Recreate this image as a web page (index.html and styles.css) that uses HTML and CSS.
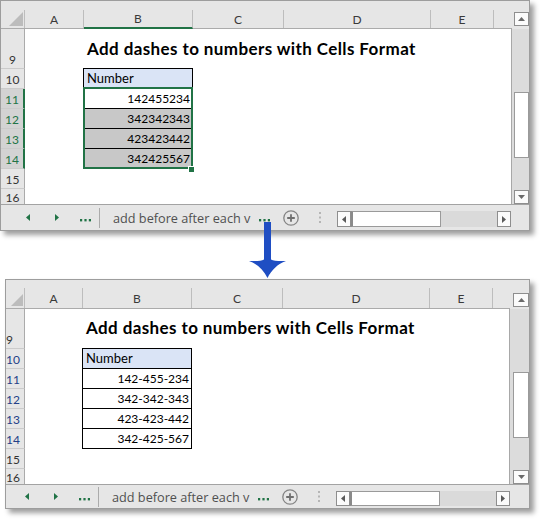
FILE: index.html
```html
<!DOCTYPE html>
<html lang="en">
<head>
<meta charset="utf-8">
<title>Add dashes to numbers with Cells Format</title>
<link rel="stylesheet" href="styles.css">
</head>
<body>
<div class="page">

  <div class="win win-top">
    <div class="sheet">
      <div class="corner"><svg class="corner-tri" viewBox="0 0 14 14"><polygon points="14,0 14,14 0,14" fill="#bcbcbc"/></svg></div>
      <div class="ch">A</div>
      <div class="ch ch-sel">B</div>
      <div class="ch">C</div>
      <div class="ch">D</div>
      <div class="ch">E</div>
      <div class="rh">9</div>
      <div class="rh">10</div>
      <div class="rh rh-sel">11</div>
      <div class="rh rh-sel">12</div>
      <div class="rh rh-sel">13</div>
      <div class="rh rh-sel">14</div>
      <div class="rh">15</div>
      <div class="rh rh-last">16</div>
      <div class="title">Add dashes to numbers with Cells Format</div>
      <div class="tbl">
        <div class="cell cell-head">Number</div>
        <div class="cell">142455234</div>
        <div class="cell shade">342342343</div>
        <div class="cell shade">423423442</div>
        <div class="cell shade">342425567</div>
      </div>
      <div class="selection"><span class="handle"></span></div>
    </div>
    <div class="vscroll">
      <div class="vbtn vbtn-up"><svg width="7" height="4" viewBox="0 0 7 4"><polygon points="0,4 7,4 3.5,0" fill="#6a6a6a"/></svg></div>
      <div class="vtrack-a"></div>
      <div class="vthumb"></div>
      <div class="vtrack-b"></div>
      <div class="vbtn"><svg width="7" height="4" viewBox="0 0 7 4"><polygon points="0,0 7,0 3.5,4" fill="#6a6a6a"/></svg></div>
    </div>
    <div class="tabbar">
      <svg class="nav nav-prev" width="4" height="7" viewBox="0 0 4 7"><polygon points="4,0 4,7 0,3.5" fill="#217346"/></svg>
      <svg class="nav nav-next" width="4" height="7" viewBox="0 0 4 7"><polygon points="0,0 0,7 4,3.5" fill="#217346"/></svg>
      <svg class="more more-a" width="11" height="3" viewBox="0 0 11 3"><rect x="0" y="0" width="2.2" height="2.4" fill="#217346"/><rect x="4.4" y="0" width="2.2" height="2.4" fill="#217346"/><rect x="8.8" y="0" width="2.2" height="2.4" fill="#217346"/></svg>
      <span class="tab-sep"></span>
      <span class="tab-name">add before after each v</span>
      <svg class="more more-b" width="11" height="3" viewBox="0 0 11 3"><rect x="0" y="0" width="2.2" height="2.4" fill="#217346"/><rect x="4.4" y="0" width="2.2" height="2.4" fill="#217346"/><rect x="8.8" y="0" width="2.2" height="2.4" fill="#217346"/></svg>
      <svg class="add-sheet" width="16" height="16" viewBox="0 0 16 16"><circle cx="8" cy="8" r="7.2" fill="none" stroke="#858585" stroke-width="1.3"/><path d="M8 4.2v7.6M4.2 8h7.6" stroke="#6f6f6f" stroke-width="1.8"/></svg>
      <svg class="vdots" width="2" height="11" viewBox="0 0 2 11"><rect x="0" y="0" width="2" height="2" fill="#b5b5b5"/><rect x="0" y="4.5" width="2" height="2" fill="#b5b5b5"/><rect x="0" y="9" width="2" height="2" fill="#b5b5b5"/></svg>
      <div class="hscroll">
        <div class="hbtn"><svg width="4" height="7" viewBox="0 0 4 7"><polygon points="4,0 4,7 0,3.5" fill="#5a5a5a"/></svg></div>
        <div class="hthumb"></div>
        <div class="htrack"></div>
        <div class="hbtn"><svg width="4" height="7" viewBox="0 0 4 7"><polygon points="0,0 0,7 4,3.5" fill="#5a5a5a"/></svg></div>
      </div>
    </div>
  </div>

  <svg class="arrow" width="38" height="57" viewBox="0 0 38 57">
    <rect x="15" y="0" width="7" height="40" fill="#1f4ec3"/>
    <path d="M0 39 C8 39.4 12.5 38.6 15 37.4 L22 37.4 C24.5 38.6 29 39.4 37 39 C28.5 42 22.5 48 18.5 56 C14.5 48 8.5 42 0 39 Z" fill="#1f4ec3"/>
  </svg>

  <div class="win win-bottom">
    <div class="sheet">
      <div class="corner"><svg class="corner-tri" viewBox="0 0 14 14"><polygon points="14,0 14,14 0,14" fill="#bcbcbc"/></svg></div>
      <div class="ch">A</div>
      <div class="ch">B</div>
      <div class="ch">C</div>
      <div class="ch">D</div>
      <div class="ch">E</div>
      <div class="rh">9</div>
      <div class="rh rh-blue">10</div>
      <div class="rh rh-blue">11</div>
      <div class="rh rh-blue">12</div>
      <div class="rh rh-blue">13</div>
      <div class="rh rh-blue">14</div>
      <div class="rh">15</div>
      <div class="rh rh-last">16</div>
      <div class="title">Add dashes to numbers with Cells Format</div>
      <div class="tbl">
        <div class="cell cell-head">Number</div>
        <div class="cell">142-455-234</div>
        <div class="cell">342-342-343</div>
        <div class="cell">423-423-442</div>
        <div class="cell">342-425-567</div>
      </div>
    </div>
    <div class="vscroll">
      <div class="vbtn vbtn-up"><svg width="7" height="4" viewBox="0 0 7 4"><polygon points="0,4 7,4 3.5,0" fill="#6a6a6a"/></svg></div>
      <div class="vtrack-a"></div>
      <div class="vthumb"></div>
      <div class="vtrack-b"></div>
      <div class="vbtn"><svg width="7" height="4" viewBox="0 0 7 4"><polygon points="0,0 7,0 3.5,4" fill="#6a6a6a"/></svg></div>
    </div>
    <div class="tabbar">
      <svg class="nav nav-prev" width="4" height="7" viewBox="0 0 4 7"><polygon points="4,0 4,7 0,3.5" fill="#217346"/></svg>
      <svg class="nav nav-next" width="4" height="7" viewBox="0 0 4 7"><polygon points="0,0 0,7 4,3.5" fill="#217346"/></svg>
      <svg class="more more-a" width="11" height="3" viewBox="0 0 11 3"><rect x="0" y="0" width="2.2" height="2.4" fill="#217346"/><rect x="4.4" y="0" width="2.2" height="2.4" fill="#217346"/><rect x="8.8" y="0" width="2.2" height="2.4" fill="#217346"/></svg>
      <span class="tab-sep"></span>
      <span class="tab-name">add before after each v</span>
      <svg class="more more-b" width="11" height="3" viewBox="0 0 11 3"><rect x="0" y="0" width="2.2" height="2.4" fill="#217346"/><rect x="4.4" y="0" width="2.2" height="2.4" fill="#217346"/><rect x="8.8" y="0" width="2.2" height="2.4" fill="#217346"/></svg>
      <svg class="add-sheet" width="16" height="16" viewBox="0 0 16 16"><circle cx="8" cy="8" r="7.2" fill="none" stroke="#858585" stroke-width="1.3"/><path d="M8 4.2v7.6M4.2 8h7.6" stroke="#6f6f6f" stroke-width="1.8"/></svg>
      <svg class="vdots" width="2" height="11" viewBox="0 0 2 11"><rect x="0" y="0" width="2" height="2" fill="#b5b5b5"/><rect x="0" y="4.5" width="2" height="2" fill="#b5b5b5"/><rect x="0" y="9" width="2" height="2" fill="#b5b5b5"/></svg>
      <div class="hscroll">
        <div class="hbtn"><svg width="4" height="7" viewBox="0 0 4 7"><polygon points="4,0 4,7 0,3.5" fill="#5a5a5a"/></svg></div>
        <div class="hthumb"></div>
        <div class="htrack"></div>
        <div class="hbtn"><svg width="4" height="7" viewBox="0 0 4 7"><polygon points="0,0 0,7 4,3.5" fill="#5a5a5a"/></svg></div>
      </div>
    </div>
  </div>

</div>
</body>
</html>
```

FILE: styles.css
```css
* { box-sizing: border-box; }

html, body {
  margin: 0;
  padding: 0;
  background: #fff;
}

body {
  font-family: "Lato", "Liberation Sans", sans-serif;
  color: #000;
}

.page {
  position: relative;
  width: 542px;
  height: 521px;
}

/* ---------- window ---------- */
.win {
  display: grid;
  border: 1px solid #9d9d9d;
  background: #e6e6e6;
  box-shadow: 4px 4px 5px rgba(0, 0, 0, 0.38);
}

.win-top {
  --hl: 27px;
  width: 530px;
  height: 231px;
  grid-template-columns: 511px 17px;
  grid-template-rows: 203px 26px;
}

.win-bottom {
  --hl: 28px;
  width: 525px;
  height: 230px;
  margin: 48px 0 0 5px;
  grid-template-columns: 504px 19px;
  grid-template-rows: 204px 24px;
}

/* ---------- sheet grid ---------- */
.sheet {
  display: grid;
  overflow: hidden;
  background:
    linear-gradient(#a8a8a8, #a8a8a8) right bottom / 1px calc(100% - var(--hl)) no-repeat,
    linear-gradient(to bottom,
      #e6e6e6 0, #e6e6e6 var(--hl),
      #ababab var(--hl), #ababab calc(var(--hl) + 1px),
      #fff calc(var(--hl) + 1px));
}

.win-top .sheet {
  grid-template-columns: 24px 59px 109px 91px 147px 63px 1fr;
  grid-template-rows: 28px 40px repeat(6, 20px) 1fr;
}

.win-bottom .sheet {
  grid-template-columns: 19px 58px 109px 91px 147px 63px 1fr;
  grid-template-rows: 29px 40px repeat(6, 20px) 1fr;
}

/* column headers */
.ch,
.corner {
  grid-row: 1;
  align-self: end;
  margin-bottom: 1px;
  border-right: 1px solid #bdbdbd;
}

.win-top .ch,
.win-top .corner { height: 18px; }

.win-bottom .ch,
.win-bottom .corner { height: 20px; }

.ch {
  display: flex;
  align-items: center;
  justify-content: center;
  font-size: 12px;
  color: #3a3a3a;
}

.ch-sel {
  margin-bottom: 0;
  border-bottom: 2px solid #217346;
}
.win-top .ch-sel { height: 19px; }

.corner {
  display: flex;
  align-items: flex-end;
  justify-content: flex-end;
  padding: 0 1px 2px 0;
}

.win-top .corner-tri { width: 14px; height: 14px; }
.win-bottom .corner-tri { width: 12px; height: 12px; }

/* row headers */
.rh {
  grid-column: 1;
  display: flex;
  align-items: flex-end;
  justify-content: center;
  background: #e6e6e6;
  border-right: 1px solid #ababab;
  border-bottom: 1px solid #cbcbcb;
  font-size: 12px;
  line-height: 17px;
  color: #333;
}

.rh-last { border-bottom: 0; }

.rh-sel {
  background: #d3d3d3;
  color: #217346;
  border-right: 2px solid #217346;
}

.win-bottom .rh {
  justify-content: flex-start;
}

.rh-blue { color: #243f88; }

/* title */
.title {
  grid-area: 2 / 3 / 3 / 7;
  padding: 10px 0 0 3px;
  font-size: 17px;
  font-weight: 700;
  letter-spacing: 0.4px;
  line-height: 20px;
  white-space: nowrap;
  color: #000;
}

.win-bottom .title { padding-top: 9px; }

/* data table */
.tbl {
  grid-area: 3 / 3 / 8 / 4;
  margin: -1px 0 0 -1px;
  display: flex;
  flex-direction: column;
  border-right: 1px solid #000;
  border-bottom: 1px solid #000;
}

.cell {
  height: 20px;
  border-top: 1px solid #000;
  border-left: 1px solid #000;
  padding: 0 2px 0 3px;
  font-size: 12px;
  line-height: 19px;
  text-align: right;
  background: #fff;
  white-space: nowrap;
}

.cell-head {
  background: #dae4f6;
  text-align: left;
  font-size: 13px;
}

.shade { background: #c8c8c8; }

/* selection overlay (top window) */
.selection {
  grid-area: 4 / 3 / 8 / 4;
  margin: -2px 0 0 -1px;
  border: 2px solid #217346;
  position: relative;
  pointer-events: none;
}

.handle {
  position: absolute;
  right: -3px;
  bottom: -5px;
  width: 6px;
  height: 6px;
  background: #217346;
  border-left: 1px solid #fff;
  border-top: 1px solid #fff;
}

/* ---------- vertical scrollbar ---------- */
.vscroll {
  display: flex;
  flex-direction: column;
  background: linear-gradient(to bottom, #e6e6e6 0, #e6e6e6 calc(var(--hl) + 1px), #dcdcdc calc(var(--hl) + 1px));
}

.win-top .vscroll > * { margin-left: 2px; width: 15px; flex: none; }
.win-bottom .vscroll > * { margin-left: 3px; width: 16px; flex: none; }

.vbtn {
  height: 14px;
  border: 1px solid #8e8e8e;
  background: #fbfbfb;
  display: flex;
  align-items: center;
  justify-content: center;
}

.win-top .vbtn-up { margin-top: 11px; }
.win-bottom .vbtn-up { margin-top: 13px; }

.win-top .vtrack-a { height: 66px; }
.win-bottom .vtrack-a { height: 65px; }

.vthumb {
  height: 66px;
  border: 1px solid #9a9a9a;
  background: #fff;
}

.vscroll > .vtrack-b { flex: 1 1 auto; }

/* ---------- sheet tab bar ---------- */
.tabbar {
  grid-column: 1 / -1;
  display: flex;
  align-items: center;
  border-top: 1px solid #a3a3a3;
  background: #e6e6e6;
}

.win-top .tabbar { padding-left: 25px; }
.win-bottom .tabbar { padding-left: 19px; }

.tabbar > * { flex: none; }

.nav-next { margin-left: 25px; }

.more { margin-top: 5px; }
.more-a { margin-left: 21px; }

.tab-sep {
  margin-left: 8px;
  width: 1px;
  height: 20px;
  background: #ababab;
}

.tab-name {
  margin-left: 13px;
  width: 139px;
  overflow: hidden;
  white-space: nowrap;
  font-family: "Open Sans", "Liberation Sans", sans-serif;
  font-size: 12.7px;
  line-height: 16px;
  color: #505050;
}

.more-b { margin-left: 7px; }

.add-sheet { margin-left: 13px; }

.vdots { margin-left: 20px; }

.hscroll {
  align-self: flex-start;
  margin: 6px 0 0 16px;
  width: 174px;
  display: flex;
}

.win-top .hscroll { height: 16px; }
.win-bottom .hscroll { height: 15px; }

.hbtn {
  width: 14px;
  border: 1px solid #8e8e8e;
  background: #fbfbfb;
  display: flex;
  align-items: center;
  justify-content: center;
  flex: none;
}

.hthumb {
  width: 90px;
  flex: none;
  border: 1px solid #9a9a9a;
  border-left: 2px solid #8a8a8a;
  background: #fff;
}

.htrack {
  flex: 1 1 auto;
  background: #dadada;
}

/* ---------- connecting arrow ---------- */
.arrow {
  position: absolute;
  left: 249px;
  top: 222px;
}
```
